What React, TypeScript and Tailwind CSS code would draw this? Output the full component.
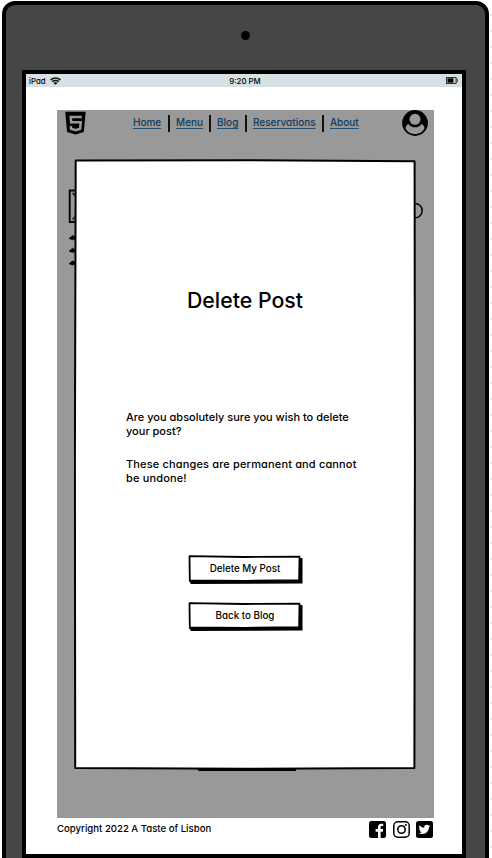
import type { ReactNode } from "react";

const navItems = [
  { label: "Home", box: "w-[28px]" },
  { label: "Menu", box: "w-[26px]" },
  { label: "Blog", box: "w-[21px]" },
  { label: "Reservations", box: "w-[62px]" },
  { label: "About", box: "w-[27px]" },
];

function Html5Logo() {
  return (
    <svg className="ml-2 mt-[1px] h-[24px] w-[22px] shrink-0" viewBox="0 0 22 24">
      <path d="M.2 .7h20.500l-1.900 20.300L10.500 23.600 2.100 21z" fill="#000" />
      <path d="M16.800 5.900H5.700l.5 5.300h9.600l-.7 6.600-4.500 1.400-4.500-1.400-.2-2.800" fill="none" stroke="#999" strokeWidth="2.500" />
    </svg>
  );
}

function Avatar() {
  return (
    <svg className="mr-[6px] h-[26px] w-[26px] shrink-0" viewBox="0 0 26 26">
      <circle cx="13" cy="13" r="12.900" fill="#000" />
      <circle cx="13" cy="9.300" r="5.500" fill="#999" />
      <path d="M6.400 13.900c1.500 2.100 3.900 3.400 6.600 3.400s5.100-1.300 6.600-3.400c1.700.7 3.200 3 2.700 4.500-1.300 3.300-5 5.500-9.300 5.500s-8-2.200-9.300-5.500c-.5-1.500 1-3.800 2.700-4.500z" fill="#999" />
    </svg>
  );
}

function Wifi() {
  return (
    <svg className="ml-[4px] h-[8px] w-[11px]" viewBox="0 0 11 8" fill="none" stroke="#151515">
      <path d="M.5 2.900Q5.500-.9 10.500 2.900" strokeWidth="1.600" />
      <path d="M2.100 4.700Q5.500 2.200 8.900 4.700" strokeWidth="1.500" />
      <path d="M3.700 5.900Q5.500 4.700 7.300 5.900L5.500 7.400z" fill="#151515" strokeWidth=".5" />
    </svg>
  );
}

function Battery() {
  return (
    <svg className="h-[7px] w-[12px]" viewBox="0 0 12 7">
      <rect x=".5" y=".5" width="9.500" height="6" fill="none" stroke="#222" strokeWidth=".9" />
      <rect x="1.500" y="1.300" width="6" height="4.400" fill="#000" />
      <path d="M10.300 2h1v3h-1" fill="none" stroke="#222" strokeWidth=".8" />
    </svg>
  );
}

function SocialIcons() {
  return (
    <div className="flex gap-[6.5px]">
      <svg className="h-[17px] w-[17px]" viewBox="0 0 17 17">
        <rect width="17" height="17" rx="2.500" fill="#000" />
        <path d="M9 17v-6.300H6.600V8H9V6.200c0-2.200 1.300-3.500 3.300-3.500l1.900.1v2.300h-1.300c-1 0-1.300.5-1.300 1.300V8h2.600l-.4 2.700h-2.200V17z" fill="#fff" />
      </svg>
      <svg className="h-[17px] w-[17px]" viewBox="0 0 17 17" fill="none" stroke="#000">
        <rect x=".8" y=".8" width="15.400" height="15.400" rx="4" strokeWidth="1.500" />
        <circle cx="8.500" cy="8.500" r="3.700" strokeWidth="1.600" />
        <circle cx="12.900" cy="4.100" r="1" fill="#000" stroke="none" />
      </svg>
      <svg className="h-[17px] w-[17px]" viewBox="0 0 17 17">
        <rect width="17" height="17" rx="2.500" fill="#000" />
        <path d="M14.200 4.900c-.4.200-.9.300-1.400.4.500-.3.900-.7 1-1.300-.5.300-1 .5-1.500.6a2.400 2.400 0 0 0-4.100 2.100C6.200 6.600 4.500 5.700 3.400 4.300c-.7 1.100-.3 2.500.7 3.200-.4 0-.7-.1-1.100-.3 0 1.100.8 2.100 1.900 2.300-.3.100-.7.100-1.100 0 .3 1 1.200 1.600 2.200 1.600-.9.800-2.200 1.100-3.400 1 1.100.7 2.300 1 3.600 1 4.300 0 6.800-3.500 6.800-7 .5-.3.900-.7 1.200-1.200z" fill="#fff" />
      </svg>
    </div>
  );
}

function SketchButton({ children }: { children: ReactNode }) {
  return (
    <button className="relative flex h-[29px] w-[115px] items-center justify-center pb-px pr-px text-[9.8px] font-medium">
      <svg className="absolute inset-0 h-full w-full" viewBox="0 0 115 29">
        <path d="M111 3l3.500 0V28.400L3 29 1 26z" fill="#000" />
        <path d="M1.500 1.200L56 2l55.500-.3-.4 23.500-54.500.6-54.800-.4z" fill="#fff" stroke="#000" strokeWidth="1.800" strokeLinejoin="round" />
      </svg>
      <span className="relative whitespace-nowrap">{children}</span>
    </button>
  );
}

function DeleteDialog() {
  return (
    <div role="dialog" className="absolute left-[17px] top-[49px] h-[611px] w-[342px]">
      <svg className="absolute inset-0 h-full w-full" viewBox="0 0 342 611">
        <path d="M1.700 1.500L171 1.200l169.600 1.100.3 300-.5 306.700L171 609.800 1.200 609 .9 300z" fill="#fff" stroke="#000" strokeWidth="2" strokeLinejoin="round" />
      </svg>
      <div className="relative flex flex-col items-center">
        <h1 className="mt-[126px] text-[21.3px] font-medium leading-[30px]">Delete Post</h1>
        <div className="ml-[52px] mt-[95px] w-[290px] whitespace-nowrap text-[11px] font-medium leading-[14px]">
          <p>Are you absolutely sure you wish to delete<br />your post?</p>
          <p className="mt-[19px] tracking-[0.15px]">These changes are permanent and cannot<br />be undone!</p>
        </div>
        <div className="ml-[1px] mt-[70px] flex flex-col gap-[18px]">
          <SketchButton>Delete My Post</SketchButton>
          <SketchButton>Back to Blog</SketchButton>
        </div>
      </div>
    </div>
  );
}

export default function App() {
  return (
    <div className="h-[858px] w-[492px] overflow-hidden bg-white bg-[radial-gradient(circle,#d4d4d4_0.5px,transparent_1px)] bg-[length:16px_16px] bg-[position:3px_7px] pl-[2px] pt-[1px] font-['Inter',sans-serif] text-black [font-feature-settings:'cv11'_1]">
      <div className="flex h-[900px] w-[487px] flex-col rounded-[13px] border-4 border-black bg-[#464646]">
        <div className="mt-[26px] h-[9px] w-[9px] shrink-0 self-center rounded-full bg-black" />
        <div className="ml-[16px] mt-[30px] flex h-[788px] w-[444px] shrink-0 flex-col border-4 border-black bg-white">
          <div className="grid h-[13px] shrink-0 grid-cols-3 items-center bg-[#d9e0e4] pl-[3px] pr-[4px] text-[7.8px] font-medium leading-[12px]">
            <div className="flex items-center">iPad<Wifi /></div>
            <div className="pl-[3px] text-center">9:20 PM</div>
            <div className="flex justify-end"><Battery /></div>
          </div>
          <div className="relative ml-[31px] mt-[23px] h-[708px] w-[377px] shrink-0 bg-[#999]">
            <header className="flex h-[26px] items-start">
              <Html5Logo />
              <nav className="ml-[46px] flex flex-1 items-center pt-[4px] text-[10px] leading-[16px] text-[#103b61]">
                {navItems.map((item, i) => (
                  <div key={item.label} className="flex items-center">
                    {i > 0 && <span className="ml-[7px] mr-[6px] h-[17px] w-[2px] shrink-0 bg-[#111]" />}
                    <a className={`${item.box} mb-[2px] whitespace-nowrap font-medium underline decoration-[#265072] underline-offset-2`}>{item.label}</a>
                  </div>
                ))}
              </nav>
              <Avatar />
            </header>
            <svg className="absolute left-0 top-0 h-full w-full" viewBox="0 0 377 708" fill="none" stroke="#050505">
              <path d="M20 80.500H12.700V112H20" strokeWidth="1.900" />
              <path d="M15.500 83l3 3M15.500 109.500l3-3" strokeWidth="2" stroke="#333" />
              <path d="M358 93.500a7 7 0 0 1 0 14.300" strokeWidth="1.500" />
              <path d="M12 128.500l3.500-3 3 1.500v2l-3 .8zM12 141.200l3.500-3 3 1.500v2l-3 .8zM12 153.800l3.500-3 3 1.500v2l-3 .8z" fill="#000" strokeWidth=".5" />
              <path d="M141 660h98" strokeWidth="2" />
            </svg>
            <DeleteDialog />
          </div>
          <footer className="ml-[31px] flex w-[376px] justify-between pt-[3px] text-[9.6px] font-medium">
            <p className="leading-[16px]">Copyright 2022 A Taste of Lisbon</p>
            <SocialIcons />
          </footer>
        </div>
      </div>
    </div>
  );
}
